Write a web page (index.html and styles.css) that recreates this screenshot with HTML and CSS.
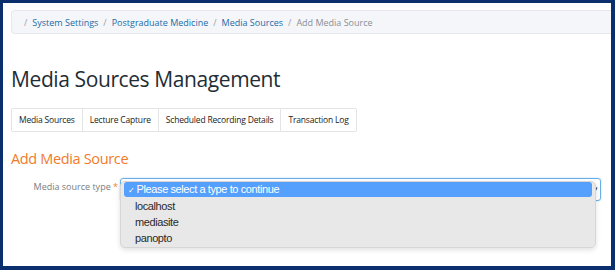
FILE: index.html
```html
<!DOCTYPE html>
<html lang="en">
<head>
    <meta charset="UTF-8">
    <title>Add Media Source</title>
    <link rel="stylesheet" href="styles.css">
</head>
<body>
    <div class="page">
        <div class="breadcrumb">
            <span class="sep">/</span>
            <a href="#">System Settings</a>
            <span class="sep">/</span>
            <a href="#">Postgraduate Medicine</a>
            <span class="sep">/</span>
            <a href="#">Media Sources</a>
            <span class="sep">/</span>
            <span class="current">Add Media Source</span>
        </div>

        <h1>Media Sources Management</h1>

        <div class="tabs">
            <a href="#">Media Sources</a>
            <a href="#">Lecture Capture</a>
            <a href="#">Scheduled Recording Details</a>
            <a href="#">Transaction Log</a>
        </div>

        <h2>Add Media Source</h2>

        <div class="form-row">
            <label>Media source type <span class="req">*</span></label>
            <div class="select-wrap">
                <div class="select"><span class="caret">▾</span></div>
                <ul class="dropdown">
                    <li class="selected"><span class="check">✓</span>Please select a type to continue</li>
                    <li>localhost</li>
                    <li>mediasite</li>
                    <li>panopto</li>
                </ul>
            </div>
        </div>
    </div>
</body>
</html>
```

FILE: styles.css
```css
html, body {
    margin: 0;
    padding: 0;
}
body {
    background-color: #0b2f6d;
    padding: 3px 4px 4px 3px;
    height: 263px;
    font-family: "Open Sans", Arial, sans-serif;
}
.page {
    background-color: #fff;
    height: 263px;
    padding: 7px 0 0 8px;
    box-sizing: border-box;
    overflow: hidden;
}
.breadcrumb {
    display: flex;
    align-items: center;
    gap: 5px;
    height: 24px;
    padding-left: 12px;
    background-color: #f5f6f9;
    border: 1px solid #e6e8ed;
    border-right: none;
    border-radius: 4px 0 0 4px;
    font-size: 9px;
    box-sizing: border-box;
}
.breadcrumb a {
    color: #1b6ca8;
    text-decoration: none;
}
.breadcrumb .sep {
    color: #9aa0a6;
}
.breadcrumb .current {
    color: #8a9096;
}
h1 {
    margin: 31px 0 0;
    font-size: 21px;
    font-weight: 400;
    color: #1f2d36;
    line-height: 28px;
    letter-spacing: -0.4px;
}
.tabs {
    display: inline-flex;
    margin-top: 15px;
    border: 1px solid #e2e4e6;
    border-radius: 2px;
}
.tabs a {
    display: block;
    padding: 0 7px;
    height: 22px;
    line-height: 22px;
    font-size: 8.5px;
    letter-spacing: -0.18px;
    color: #222;
    text-decoration: none;
    border-left: 1px solid #e2e4e6;
}
.tabs a:first-child {
    border-left: none;
}
h2 {
    margin: 17px 0 0;
    font-size: 14.5px;
    font-weight: 400;
    color: #f07b2c;
    line-height: 20px;
    letter-spacing: -0.35px;
}
.form-row {
    display: flex;
    align-items: flex-start;
    margin-top: 9px;
}
label {
    width: 109px;
    padding: 3px 2px 0 0;
    font-size: 9px;
    line-height: 12px;
    color: #787d82;
    white-space: nowrap;
    text-align: right;
    box-sizing: border-box;
}
.req {
    color: #f07b2c;
}
.select-wrap {
    position: relative;
    flex: 0 0 481px;
}
.select {
    height: 23px;
    border: 1px solid #6aaee6;
    border-radius: 3px;
    box-sizing: border-box;
    box-shadow: 0 0 2px rgba(102, 175, 233, 0.5);
    position: relative;
}
.caret {
    position: absolute;
    right: 2px;
    top: 5px;
    font-size: 7px;
    color: #444;
}
.dropdown {
    position: absolute;
    left: 0;
    top: 3px;
    width: 476px;
    margin: 0;
    padding: 0 3px 1px;
    list-style: none;
    background-color: #e8e8e8;
    border: 1px solid #d6d6d6;
    border-radius: 5px;
    box-sizing: border-box;
    box-shadow: 0 2px 5px rgba(0, 0, 0, 0.12);
    font-family: "Liberation Sans", Arial, sans-serif;
    font-size: 11px;
    letter-spacing: -0.4px;
    color: #2a2a2a;
}
.dropdown li {
    height: 16px;
    line-height: 16px;
    padding-left: 11px;
}
.dropdown li.selected {
    height: 15px;
    line-height: 15px;
    margin-bottom: 1px;
    padding-left: 4px;
    background-color: #55a0fd;
    color: #fff;
    border-radius: 3px;
}
.check {
    font-size: 8px;
    margin-right: 2px;
}
```
